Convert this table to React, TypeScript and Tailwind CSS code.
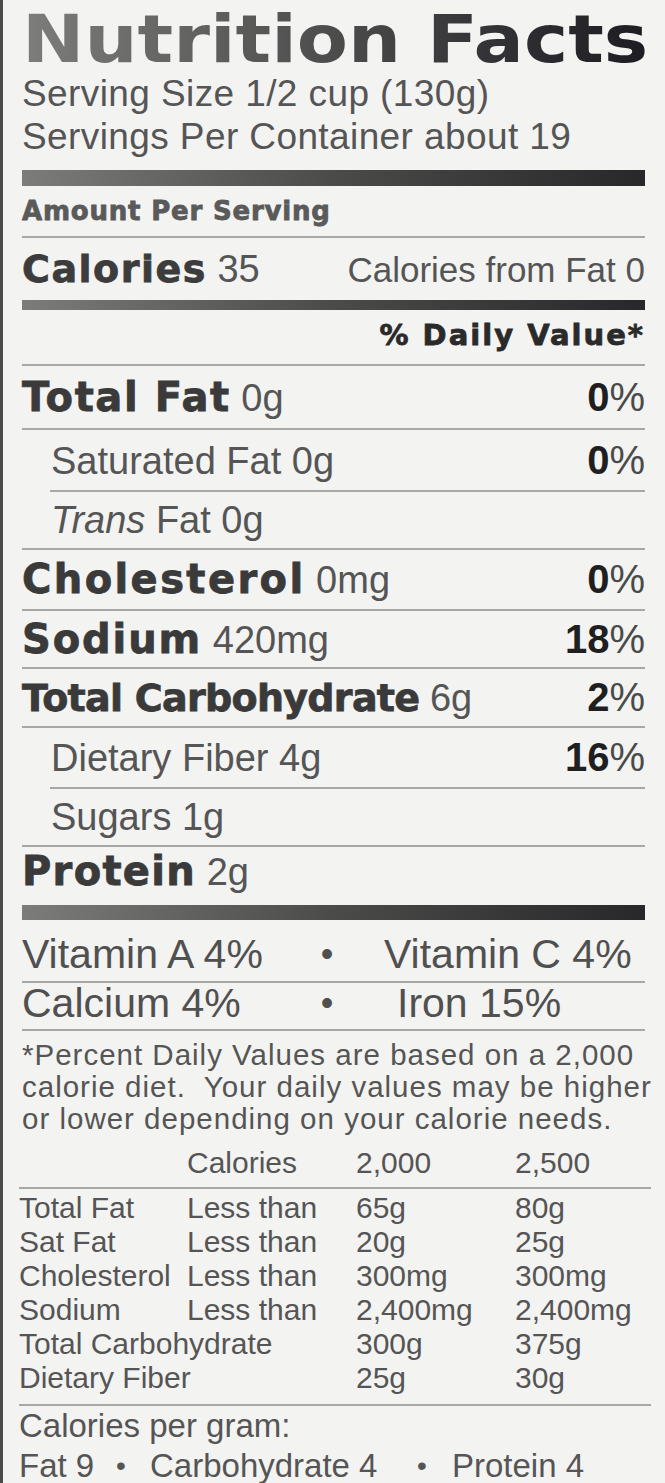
const regular = "font-['Liberation_Sans',Arial,sans-serif]";
const heavy = "font-['DejaVu_Sans',sans-serif] font-bold [-webkit-text-stroke:0.8px_currentColor]";

const limits = [
  ["Total Fat", "Less than", "65g", "80g"],
  ["Sat Fat", "Less than", "20g", "25g"],
  ["Cholesterol", "Less than", "300mg", "300mg"],
  ["Sodium", "Less than", "2,400mg", "2,400mg"],
  ["Total Carbohydrate", "", "300g", "375g"],
  ["Dietary Fiber", "", "25g", "30g"],
];

function Rule({ indent = false }: { indent?: boolean }) {
  return <div className={indent ? "ml-[28px] h-[2px] bg-[#a8a8a8]" : "h-[2px] bg-[#a8a8a8]"} />;
}

function Bar({ className }: { className: string }) {
  return <div className={`bg-linear-to-r from-[#7c7c7a] via-[#4b4b49] to-[#28282b] ${className}`} />;
}

function Percent({ value }: { value: string }) {
  return (
    <span className={`${regular} text-[40px]`}>
      <span className="font-bold text-[#1f1f1f]">{value}</span>
      <span className="text-[#4a4a4a]">%</span>
    </span>
  );
}

function Nutrient({
  label,
  amount,
  dv,
  rowClass,
  labelClass,
}: {
  label: string;
  amount: string;
  dv?: string;
  rowClass: string;
  labelClass: string;
}) {
  return (
    <div className={`flex items-baseline justify-between whitespace-nowrap text-[40px] ${rowClass}`}>
      <span>
        <span className={`${heavy} text-[#3a3a3a] ${labelClass}`}>{label}</span>
        <span className={`${regular} text-[38px] text-[#555]`}> {amount}</span>
      </span>
      {dv ? <Percent value={dv} /> : null}
    </div>
  );
}

function SubNutrient({ children, dv, rowClass }: { children: React.ReactNode; dv?: string; rowClass: string }) {
  return (
    <div className={`flex items-baseline justify-between whitespace-nowrap pl-[29px] text-[38px] ${rowClass}`}>
      <span className={`${regular} text-[#555]`}>{children}</span>
      {dv ? <Percent value={dv} /> : null}
    </div>
  );
}

export default function App() {
  return (
    <div className={`h-[1483px] w-[665px] overflow-hidden border-l-[3px] border-[#4a4a4a] bg-[#f3f3f2] pl-[19px] pr-[20px] text-[#555] ${regular}`}>
      <div className="pt-[8px]">
        <div
          className="h-[64px] w-fit origin-left scale-x-[1.13] whitespace-nowrap bg-linear-to-r from-[#7d7d7b] via-[#4c4c4c] to-[#1c1c22] bg-clip-text font-['DejaVu_Sans',sans-serif] text-[66px] leading-[64px] font-bold text-transparent"
        >
          Nutrition Facts
        </div>
      </div>

      <div className="h-[43px] whitespace-nowrap text-[37px] leading-[43px] tracking-[0.4px]">Serving Size 1/2 cup (130g)</div>
      <div className="h-[43px] whitespace-nowrap text-[37px] leading-[43px] tracking-[0.4px]">Servings Per Container about 19</div>

      <Bar className="mt-[12px] h-[16px]" />

      <div className={`${heavy} h-[50px] whitespace-nowrap text-[26px] leading-[50px] tracking-[0.8px] text-[#5a5a5a]`}>
        Amount Per Serving
      </div>
      <Rule />

      <div className="flex h-[62px] items-baseline justify-between whitespace-nowrap text-[38px] leading-[62px]">
        <span>
          <span className={`${heavy} tracking-[1.5px] text-[#3c3c3c]`}>Calories</span>
          <span className="text-[#555]"> 35</span>
        </span>
        <span className="text-[35px] text-[#555]">Calories from Fat 0</span>
      </div>

      <Bar className="h-[10px]" />

      <div className="h-[54px] text-right">
        <span className={`${heavy} whitespace-nowrap text-[29px] leading-[50px] tracking-[2px] text-[#2a2a2a]`}>
          % Daily Value*
        </span>
      </div>
      <Rule />

      <Nutrient label="Total Fat" amount="0g" dv="0" rowClass="h-[62px] leading-[62px]" labelClass="tracking-[1.6px]" />
      <Rule />
      <SubNutrient dv="0" rowClass="h-[60px] leading-[60px]">
        Saturated Fat 0g
      </SubNutrient>
      <Rule indent />
      <SubNutrient rowClass="h-[56px] leading-[56px]">
        <i>Trans</i> Fat 0g
      </SubNutrient>
      <Rule />
      <Nutrient label="Cholesterol" amount="0mg" dv="0" rowClass="h-[59px] leading-[59px]" labelClass="tracking-[2.4px]" />
      <Rule />
      <Nutrient label="Sodium" amount="420mg" dv="18" rowClass="h-[56px] leading-[56px]" labelClass="tracking-[1.9px]" />
      <Rule />
      <Nutrient
        label="Total Carbohydrate"
        amount="6g"
        dv="2"
        rowClass="h-[57px] leading-[57px]"
        labelClass="text-[38px] tracking-[-0.7px]"
      />
      <Rule />
      <SubNutrient dv="16" rowClass="h-[59px] leading-[59px]">
        Dietary Fiber 4g
      </SubNutrient>
      <Rule indent />
      <SubNutrient rowClass="h-[56px] leading-[56px]">Sugars 1g</SubNutrient>
      <Rule />
      <Nutrient label="Protein" amount="2g" rowClass="h-[58px] leading-[48px]" labelClass="tracking-[1.3px]" />

      <Bar className="h-[15px]" />

      <div className="flex h-[61px] whitespace-nowrap pt-[11px] text-[41px] leading-[46px] text-[#505050]">
        <span className="w-[298px]">Vitamin A 4%</span>
        <span className="w-[14px] text-center text-[36px]">•</span>
        <span className="ml-[50px]">Vitamin C 4%</span>
      </div>
      <Rule />
      <div className="flex h-[46px] whitespace-nowrap text-[41px] leading-[40px] text-[#505050]">
        <span className="w-[298px]">Calcium 4%</span>
        <span className="w-[14px] text-center text-[36px]">•</span>
        <span className="ml-[63px]">Iron 15%</span>
      </div>
      <Rule />

      <div className="-mr-[6px] h-[104px] whitespace-pre pt-[8px] text-[29.5px] leading-[32px] tracking-[1px] text-[#555]">
        <div>*Percent Daily Values are based on a 2,000</div>
        <div>calorie diet.  Your daily values may be higher</div>
        <div>or lower depending on your calorie needs.</div>
      </div>

      <div className="-mr-[6px] -ml-[3px] text-[30px] text-[#555]">
        <div className="grid h-[52px] grid-cols-[168px_169px_159px_1fr] whitespace-nowrap pt-[4px] leading-[48px]">
          <span />
          <span>Calories</span>
          <span>2,000</span>
          <span>2,500</span>
        </div>
        <Rule />
        <div className="pt-[2px] pb-[9px]">
          {limits.map((row) => (
            <div key={row[0]} className="grid h-[34px] grid-cols-[168px_169px_159px_1fr] whitespace-nowrap leading-[34px]">
              {row.map((cell, i) => (
                <span key={i}>{cell}</span>
              ))}
            </div>
          ))}
        </div>
        <Rule />
        <div className="h-[40px] whitespace-nowrap text-[33px] leading-[40px]">Calories per gram:</div>
        <div className="flex h-[40px] whitespace-nowrap text-[33px] leading-[40px]">
          <span className="w-[94px]">Fat 9</span>
          <span className="w-[16px] text-center text-[28px]">•</span>
          <span className="ml-[21px] w-[256px]">Carbohydrate 4</span>
          <span className="w-[32px] text-center text-[28px]">•</span>
          <span className="ml-[14px]">Protein 4</span>
        </div>
      </div>
    </div>
  );
}
